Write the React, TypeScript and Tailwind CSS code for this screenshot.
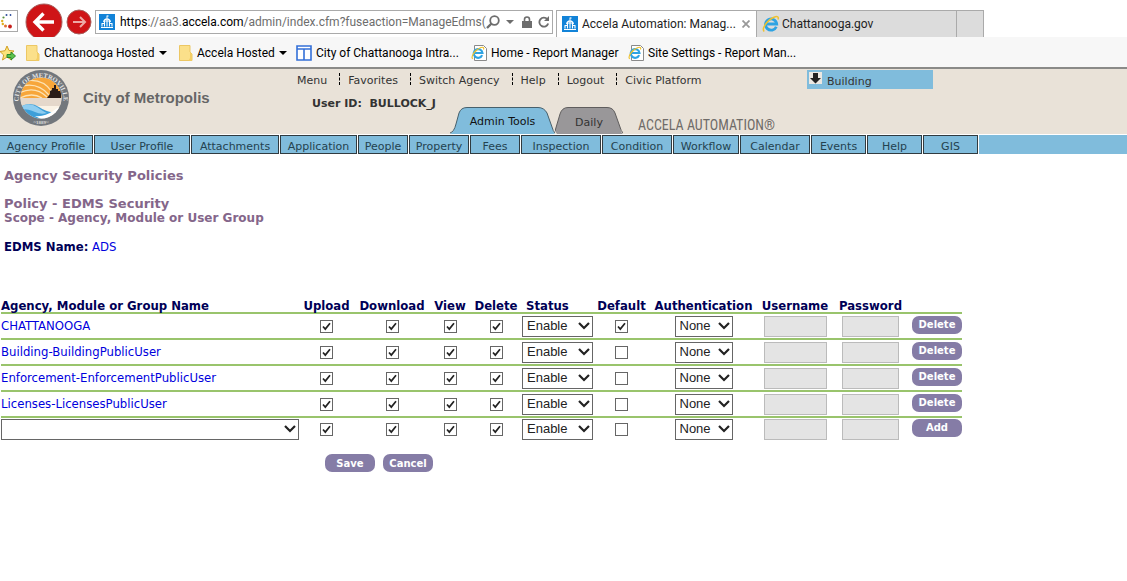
import React from "react";

const ui = "font-['Roboto','Open_Sans',sans-serif]";
const verdana = "font-['DejaVu_Sans',sans-serif]";
const tahoma = "font-['DejaVu_Sans_Condensed','Noto_Sans',sans-serif]";

function DomeIcon() {
  return (
    <svg viewBox="0 0 16 16" className="size-4 shrink-0" aria-hidden="true">
      <rect width="16" height="16" fill="#1283d8" />
      <path d="M8 1.500v3M8 2h1.600" fill="none" stroke="#fff" />
      <path d="M4 8C4.400 5.600 6 4.300 8 4.300S11.600 5.600 12 8z" fill="#fff" />
      <path d="M2 13.500h12M3 12.500V9.800M5.500 12.500V8M8 12.500V8M10.500 12.500V8M13 12.500V9.800M2.500 9.500h2.500M11 9.500h2.500" fill="none" stroke="#fff" strokeWidth="1.100" />
      <path d="M6.500 8V6M8 8V5.500M9.500 8V6" stroke="#1283d8" strokeWidth=".5" />
    </svg>
  );
}

function FolderIcon() {
  return (
    <svg viewBox="0 0 14 16" className="h-4 w-3.5 shrink-0" aria-hidden="true">
      <path d="M.5.5h10.5v6.500l2 2V15.500H.5z" fill="#fbe08a" stroke="#ecc764" />
      <path d="M11 7v6l-1.500 2.500h3.500V9z" fill="#f4cf66" />
    </svg>
  );
}

function ExplorerIcon({ page = false }: { page?: boolean }) {
  return (
    <svg viewBox="0 0 18 18" className="size-[18px] shrink-0" aria-hidden="true">
      {page && <path d="M3.500 1.500h9l3 3v12h-12z" fill="#fff" stroke="#8a8a8a" />}
      <g transform={page ? "translate(0 2) scale(.78)" : undefined}>
        <path d="M14.300 11.700A5.600 5.600 0 1 1 14.700 9H4.500" fill="none" stroke="#2ea3e3" strokeWidth="2.800" />
        <path d="M2.300 16.500C-.8 14.200 5 5 12 2.200c3.500-1.400 5-.3 4 2.300" fill="none" stroke="#efc22f" strokeWidth="1.500" />
      </g>
    </svg>
  );
}

function CitySeal() {
  return (
    <svg viewBox="0 0 56 56" className="size-14 shrink-0" role="img" aria-label="City seal">
      <defs>
        <clipPath id="seal"><circle cx="28" cy="28" r="20.500" /></clipPath>
        <path id="arc" d="M5.500 30A22.500 22.500 0 0 1 50.500 30" />
      </defs>
      <circle cx="28" cy="28" r="28" fill="#72777d" />
      <circle cx="28" cy="28" r="20.500" fill="#fbf3e6" />
      <g clipPath="url(#seal)">
        <rect x="7" y="7" width="42" height="21" fill="#f7a63a" />
        <g fill="none" stroke="#fde3b4" strokeWidth="1.300">
          <path d="M6 17q18-6 30 8" />
          <path d="M6 23q16-8 28 4" />
          <path d="M12 11q18-3 27 11" />
          <path d="M7 28q12-6 22 0" />
        </g>
        <rect x="7" y="28" width="42" height="8" fill="#e5d8cb" />
        <path d="M7 37q10-6 19 0t15 5q-8 7-18 7T7 42z" fill="#3d9fd9" />
        <path d="M9 36q8-4 15 1t10 6q-6 2-12-1T8 39z" fill="#8fcdf0" />
        <path d="M22 46q10 1 18-5t10-3l-4 10-14 3z" fill="#fff" />
        <path d="M34 28l3-4v-3l2-1v-2h2v-3h2v4h2v2h3v7z" fill="#2a1c18" />
      </g>
      <text fontSize="6.500" fontWeight="700" fill="#e8e8e8" fontFamily="Liberation Serif, serif" textAnchor="middle">
        <textPath href="#arc" startOffset="50%">CITY OF METROVILLE</textPath>
      </text>
      <text x="28" y="54" fontSize="5" fontWeight="700" fill="#dcdcdc" fontFamily="Liberation Serif, serif" textAnchor="middle">~1889~</text>
    </svg>
  );
}

function Caret() {
  return (
    <svg viewBox="0 0 8 4" className="h-1 w-2 shrink-0" aria-hidden="true">
      <path d="M0 0h8L4 4z" fill="currentColor" />
    </svg>
  );
}

function BrowserBar() {
  return (
    <div className={`flex h-[37px] items-end overflow-hidden text-[12px] text-[#222] ${ui}`}>
      <div className="mb-[5px] flex h-[22px] w-[18px] shrink-0 items-center border border-l-0 border-[#aaa]">
        <svg viewBox="0 0 16 18" className="h-[18px] w-4" aria-hidden="true">
          <circle cx="10.500" cy="3" r=".9" fill="#2d4c9a" />
          <circle cx="6.500" cy="3" r="1" fill="#2d4c9a" />
          <circle cx="3.500" cy="5.500" r="1.100" fill="#5a8f3a" />
          <circle cx="2.200" cy="9" r="1.200" fill="#e0b020" />
          <circle cx="2.800" cy="12" r="1.200" fill="#e0b020" />
          <circle cx="5.500" cy="14" r="1.500" fill="#e07030" />
          <circle cx="10" cy="14.500" r="1.900" fill="#c8201c" />
        </svg>
      </div>
      <button aria-label="Back" className="ml-[7px] h-[34px] w-[38px] shrink-0 overflow-hidden">
        <svg viewBox="0 0 38 34" className="h-[34px] w-[38px]">
          <circle cx="19" cy="19" r="18" fill="#cf1417" stroke="#a8605e" />
          <path d="M29 19H11M18.500 10.500L10 19l8.500 8.500" fill="none" stroke="#fff" strokeWidth="3.400" />
        </svg>
      </button>
      <button aria-label="Forward" className="mb-0.5 ml-[3px] h-[26px] w-[26px] shrink-0">
        <svg viewBox="0 0 26 26" className="size-[26px]">
          <circle cx="13" cy="13" r="12" fill="#cf1417" stroke="#a8605e" />
          <path d="M7 13h12M14 8l5 5-5 5" fill="none" stroke="#eda9a6" strokeWidth="2" />
        </svg>
      </button>
      <div className="mb-[3px] ml-[3px] flex h-6 w-[458px] shrink-0 items-center border border-[#aaa] pr-1.5 pl-[3px] text-[#6d6d6d]">
        <DomeIcon />
        <div className="ml-[5px] flex-1 whitespace-nowrap">
          <span className="text-black">https</span>://aa3.<span className="text-black">accela.com</span>/admin/index.cfm?fuseaction=ManageEdms(
        </div>
        <button aria-label="Search" className="shrink-0">
          <svg viewBox="0 0 14 14" className="size-3.5"><circle cx="8.500" cy="5.500" r="4.300" fill="none" stroke="currentColor" strokeWidth="1.800" /><path d="M5.500 8.500L1 13" stroke="currentColor" strokeWidth="2.400" /></svg>
        </button>
        <button aria-label="Search options" className="ml-1.5 shrink-0"><Caret /></button>
        <svg viewBox="0 0 10 12" className="ml-2 h-3 w-2.5 shrink-0" aria-hidden="true">
          <rect y="5" width="10" height="7" fill="currentColor" />
          <path d="M2.500 5.500V3.500a2.500 2.500 0 0 1 5 0v2" fill="none" stroke="currentColor" strokeWidth="1.600" />
        </svg>
        <button aria-label="Refresh" className="ml-1.5 shrink-0">
          <svg viewBox="0 0 12 12" className="size-3"><path d="M10.200 7.500A4.500 4.500 0 1 1 9.300 3.200" fill="none" stroke="currentColor" strokeWidth="1.800" /><path d="M11 0v5H6z" fill="currentColor" /></svg>
        </button>
      </div>
      <div className="ml-[3px] flex h-[27px] w-[201px] shrink-0 items-center border border-b-0 border-[#aaa] pl-[5px] whitespace-nowrap">
        <DomeIcon />
        <span className="ml-1 flex-1">Accela Automation: Manag...</span>
        <button aria-label="Close tab" className="mr-1.5">
          <svg viewBox="0 0 8 8" className="size-2"><path d="M.5.5l7 7M7.500.5l-7 7" stroke="#999" strokeWidth="1.800" /></svg>
        </button>
      </div>
      <div className="flex h-[27px] w-[200px] shrink-0 items-center gap-0.5 border border-b-0 border-l-0 border-[#aaa] bg-[#dcdcdc] pl-[5px]">
        <ExplorerIcon />
        <span>Chattanooga.gov</span>
      </div>
      <button aria-label="New tab" className="h-[27px] w-[27px] shrink-0 border border-b-0 border-l-0 border-[#aaa] bg-[#dcdcdc]" />
    </div>
  );
}

function Bookmarks() {
  return (
    <div className={`flex h-8 items-center overflow-hidden border-b-2 border-[#8a8a88] bg-[#f7f7f7] pt-0.5 text-[12px] whitespace-nowrap text-black ${ui}`}>
      <svg viewBox="0 0 16 16" className="size-4 shrink-0" aria-hidden="true">
        <path d="M7 1l2 4.500 5 .5-3.800 3.300L11.500 15 7 12l-4.500 3 1.200-5L0 6.500l5-.8z" fill="#fbe37a" stroke="#d3a127" />
        <path d="M7 9.500h4V7l4.500 4-4.500 4v-2.500H7z" fill="#5cc24c" stroke="#2c8a2c" />
      </svg>
      <a href="#hosted" className="ml-2.5 flex w-[141px] shrink-0 items-center gap-1"><FolderIcon /><span className="flex-1">Chattanooga Hosted</span><Caret /></a>
      <a href="#accela" className="ml-3 flex w-[107px] shrink-0 items-center gap-1"><FolderIcon /><span className="flex-1">Accela Hosted</span><Caret /></a>
      <a href="#intranet" className="ml-2.5 flex w-[163px] shrink-0 items-center gap-1">
        <svg viewBox="0 0 16 16" className="size-4 shrink-0" aria-hidden="true"><path d="M1 1h14v14H1zM1 4h14M8 4v11" fill="#fff" stroke="#3470d8" strokeWidth="1.600" /></svg>
        City of Chattanooga Intra...
      </a>
      <a href="#home" className="ml-3 flex w-[149px] shrink-0 items-center gap-0.5"><ExplorerIcon page />Home - Report Manager</a>
      <a href="#settings" className="ml-2 flex items-center gap-0.5"><ExplorerIcon page />Site Settings - Report Man...</a>
    </div>
  );
}

const links = ["Menu", "Favorites", "Switch Agency", "Help", "Logout", "Civic Platform"];

function Header() {
  return (
    <header className="flex h-[65px] overflow-hidden bg-[#e9e2d8] text-[#333]">
      <div className="flex w-[297px] shrink-0 items-start gap-3.5 pt-px pl-[13px]">
        <CitySeal />
        <h1 className="mt-[18px] font-['Liberation_Sans',sans-serif] text-[15px] leading-5 font-bold text-[#666]">City of Metropolis</h1>
      </div>
      <div className={`flex w-[510px] shrink-0 flex-col justify-between ${verdana}`}>
        <nav className="flex pt-1 text-[11px] leading-4">
          {links.map((l, i) => (
            <a key={l} href={`#${l}`} className={i ? "ml-3 flex gap-2" : ""}>
              {i > 0 && <span className="h-3 border-l border-dashed border-black" />}
              {l}
            </a>
          ))}
        </nav>
        <div className="flex items-end">
          <p className="mb-[22px] w-[153px] pl-[15px] text-[11px] leading-4 font-bold whitespace-pre">User ID:  BULLOCK_J</p>
          <a href="#admin" className="grid h-7 w-[105px] place-items-center text-[11px] text-[#111]">
            <svg viewBox="0 0 105 28" className="h-7 w-[105px] [grid-area:1/1]" aria-hidden="true">
              <path d="M0 28Q4 26 6 18L9 7Q11 1.500 17 1.500H88Q94 1.500 97 7L102 21Q103 26 105 28" fill="#80bcdc" />
              <path d="M0 27Q4 26 6 18L9 7Q11 1.500 17 1.500H88Q94 1.500 97 7L102 21Q103 25 105 27" fill="none" stroke="#47606c" />
            </svg>
            <span className="mt-1 [grid-area:1/1]">Admin Tools</span>
          </a>
          <a href="#daily" className="grid h-7 w-[68px] place-items-center text-[11px]">
            <svg viewBox="0 0 68 28" className="h-7 w-[68px] [grid-area:1/1]" aria-hidden="true">
              <path d="M0 25L5 8Q7 1.500 13 1.500H52Q58 1.500 60 7L65 21Q66 27 68 28H2" fill="#999799" />
              <path d="M0 25L5 8Q7 1.500 13 1.500H52Q58 1.500 60 7L65 21Q66 25 68 27" fill="none" stroke="#5f5d5d" />
            </svg>
            <span className="mt-1.5 [grid-area:1/1]">Daily</span>
          </a>
          <span className="ml-[15px] font-['Liberation_Sans_Narrow','Roboto_Condensed','Liberation_Sans',sans-serif] text-[14px] leading-[18px] text-[#6f6b68]">ACCELA AUTOMATION®</span>
        </div>
      </div>
      <button className={`mt-px flex h-[19px] w-[126px] shrink-0 items-start gap-[5px] bg-[#80bcdc] pt-0.5 pl-0.5 text-[11px] ${verdana}`}>
        <svg viewBox="0 0 13 13" className="size-[13px]" aria-hidden="true">
          <path d="M0 0h13v12H0z" fill="#ece8e2" />
          <path d="M4 1h5v5h3L6.500 11.500 1 6h3z" fill="#222" />
        </svg>
        <span className="pt-0.5 leading-4">Building</span>
      </button>
    </header>
  );
}

const modules: [string, string][] = [
  ["Agency Profile", "w-[93px] border-l-0"],
  ["User Profile", "w-24"],
  ["Attachments", "w-[88px]"],
  ["Application", "w-[77px]"],
  ["People", "w-[50px]"],
  ["Property", "w-[60px]"],
  ["Fees", "w-[50px]"],
  ["Inspection", "w-20"],
  ["Condition", "w-[70px]"],
  ["Workflow", "w-[66px]"],
  ["Calendar", "w-[70px]"],
  ["Events", "w-[55px]"],
  ["Help", "w-[55px]"],
  ["GIS", "w-[55px]"],
];

function ModuleNav() {
  return (
    <nav className={`mt-px flex h-[19px] gap-px text-[11px] leading-[21px] text-[#24424f] ${verdana}`}>
      {modules.map(([name, width]) => (
        <a key={name} href={`#${name}`} className={`shrink-0 border border-[#303b40] bg-[#80bcdc] text-center whitespace-nowrap ${width}`}>{name}</a>
      ))}
      <span className="flex-1 bg-[#80bcdc]" />
    </nav>
  );
}

function Check({ label, on = true }: { label: string; on?: boolean }) {
  return (
    <label className="mx-auto grid size-[13px] place-items-center">
      <input type="checkbox" aria-label={label} defaultChecked={on} className="peer size-[13px] appearance-none border border-[#666] bg-white [grid-area:1/1]" />
      <svg viewBox="0 0 9 9" className="pointer-events-none invisible size-[9px] [grid-area:1/1] peer-checked:visible" aria-hidden="true">
        <path d="M1 4.500l2.300 2.600L8 1.200" fill="none" stroke="#222" strokeWidth="1.700" />
      </svg>
    </label>
  );
}

function Select({ label, value, width }: { label: string; value: string; width: string }) {
  return (
    <span className={`grid h-[21px] items-center ${width}`}>
      <select aria-label={label} className="h-[21px] w-full appearance-none border border-[#666] bg-white pb-0.5 pl-1 font-['Liberation_Sans',sans-serif] text-[13px] leading-[17px] text-[#222] [grid-area:1/1]">
        <option>{value}</option>
      </select>
      <svg viewBox="0 0 12 8" className="pointer-events-none mr-[3px] h-2 w-3 justify-self-end [grid-area:1/1]" aria-hidden="true">
        <path d="M1 1l5 5 5-5" fill="none" stroke="#222" strokeWidth="2.200" />
      </svg>
    </span>
  );
}

function PillButton({ children }: { children: string }) {
  return (
    <button className={`block h-[18px] w-[50px] rounded-[7px] bg-[#857ca6] text-center text-[10px] leading-[17px] font-bold text-white ${verdana}`}>{children}</button>
  );
}

const columns: [string, string][] = [
  ["Agency, Module or Group Name", "w-[298px]"],
  ["Upload", "w-[55px]"],
  ["Download", "w-[76px]"],
  ["View", "w-10"],
  ["Delete", "w-[52px]"],
  ["Status", "w-[72px]"],
  ["Default", "w-[55px]"],
  ["Authentication", "w-[109px]"],
  ["Username", "w-[74px]"],
  ["Password", "w-[77px]"],
  ["", "w-[53px]"],
];

const rows = ["CHATTANOOGA", "Building-BuildingPublicUser", "Enforcement-EnforcementPublicUser", "Licenses-LicensesPublicUser", ""];

function PolicyTable() {
  return (
    <table className="ml-px w-[961px] table-fixed border-collapse">
      <colgroup>{columns.map(([n, w]) => <col key={n} className={w} />)}</colgroup>
      <thead>
        <tr className="text-[13px] leading-[13px] text-[#000056]">
          {columns.map(([n]) => (
            <th key={n} className="p-0 whitespace-nowrap first:text-left [&:nth-child(6)]:pl-1 [&:nth-child(6)]:text-left">{n}</th>
          ))}
        </tr>
      </thead>
      <tbody>
        {rows.map((name) => (
          <tr key={name} className="h-[26px] border-t-2 border-[#99c46c] last:h-[23px] [&>td]:p-0 [&>td]:align-middle">
            <td className="text-[13px] leading-4 text-[#0000dd]">
              {name ? <a href={`#${name}`}>{name}</a> : <Select label="New group" value="" width="w-[298px]" />}
            </td>
            {["Upload", "Download", "View", "Delete"].map((p) => (
              <td key={p}><Check label={`${p} ${name}`} /></td>
            ))}
            <td><Select label={`Status ${name}`} value="Enable" width="w-[71px]" /></td>
            <td><Check label={`Default ${name}`} on={name === "CHATTANOOGA"} /></td>
            <td><div className="flex justify-center"><Select label={`Authentication ${name}`} value="None" width="w-[58px]" /></div></td>
            <td><input aria-label={`Username ${name}`} disabled className="mx-auto block h-[21px] w-[63px] border border-[#bbb] bg-[#e4e4e4]" /></td>
            <td><input aria-label={`Password ${name}`} type="password" disabled className="mx-auto block h-[21px] w-[57px] border border-[#bbb] bg-[#e4e4e4]" /></td>
            <td><div className="flex h-[21px] justify-end"><PillButton>{name ? "Delete" : "Add"}</PillButton></div></td>
          </tr>
        ))}
      </tbody>
    </table>
  );
}

export default function App() {
  return (
    <div className="min-h-screen overflow-x-hidden bg-white">
      <BrowserBar />
      <Bookmarks />
      <Header />
      <ModuleNav />
      <main className={tahoma}>
        <div className={`px-1 pt-3.5 text-[13px] leading-[15px] font-bold text-[#84668a] ${verdana}`}>
          <h2>Agency Security Policies</h2>
          <p className="mt-[13px]">Policy - EDMS Security</p>
          <p className="text-[12px]">Scope - Agency, Module or User Group</p>
        </div>
        <p className="mt-[13px] mb-[45px] px-1 text-[13px] leading-[15px] text-[#0000dd]">
          <strong className="text-[#000056]">EDMS Name:</strong> ADS
        </p>
        <PolicyTable />
        <div className="mt-3.5 ml-[325px] flex gap-2">
          <PillButton>Save</PillButton>
          <PillButton>Cancel</PillButton>
        </div>
      </main>
    </div>
  );
}
